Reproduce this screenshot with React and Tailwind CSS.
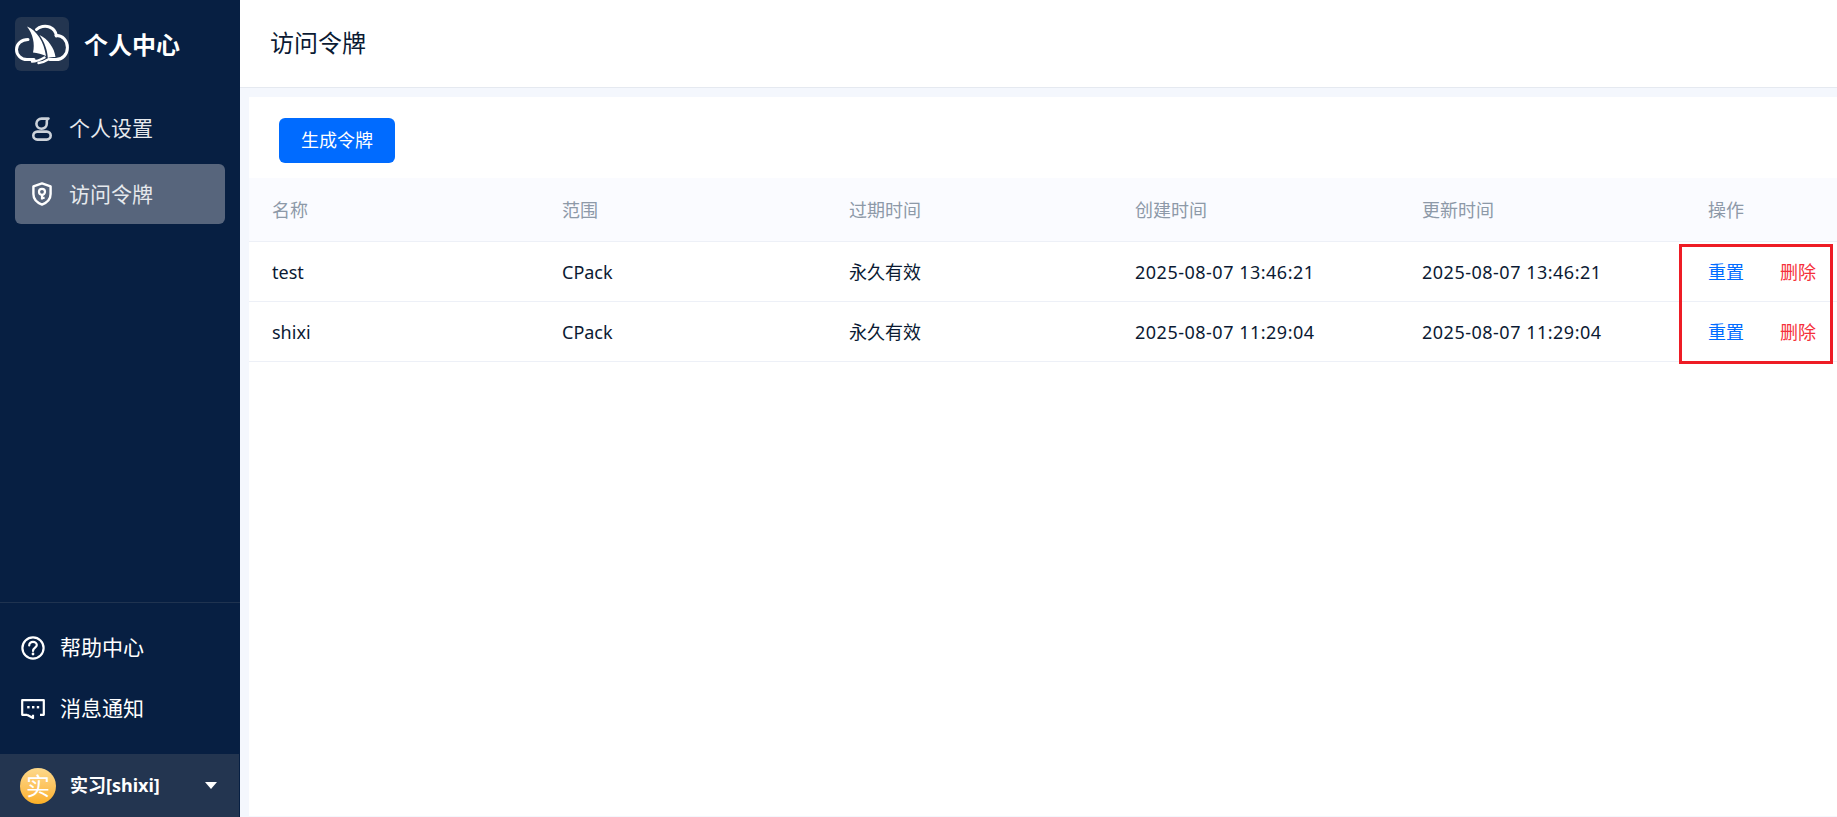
const font = { fontFamily: '"Noto Sans", "Noto Sans CJK SC", sans-serif' };

function Logo() {
  return (
    <svg width="54" height="54" viewBox="0 0 54 54" fill="none">
      <path d="M13 22.5 C6.5 22.5 1.5 27 1.5 32.6 C1.5 38 6 42.6 12 42.6 L19 42.6" stroke="#fff" strokeWidth="3" strokeLinecap="round" />
      <path d="M21.5 12.5 C24.5 9.5 30 8.4 34.5 10 C38.5 11.6 41 15 41.4 19" stroke="#fff" strokeWidth="3" strokeLinecap="round" />
      <path d="M41 18.5 C47.5 18 52.4 23.6 52.4 30.4 C52.4 37.4 47.5 42.6 41 42.6 L35 42.6" stroke="#fff" strokeWidth="3" strokeLinecap="round" />
      <path d="M12 9.5 C22 13.5 29 25 31 39 C27 37 22.5 36 18 35.5 C20 27 18 17 12 9.5 Z" fill="#fff" />
      <path d="M24.5 18 C33 22 39.5 31 40.5 40 C37.5 40 35 40.4 32.8 41 C32.4 33 29.5 25 24.5 18 Z" fill="#fff" />
      <path d="M17 44.5 C22 44.5 26 42.5 29.5 40.5 M23.5 46 C27.5 45.5 31 44 34 42" stroke="#fff" strokeWidth="2.4" strokeLinecap="round" />
    </svg>
  );
}

function UserIcon() {
  return (
    <svg width="20" height="24" viewBox="0 0 20 24" fill="none" stroke="#ccd2da" strokeWidth="2.6">
      <path d="M16.5 1.6 H9.6 C6.6 1.6 4.4 3.9 4.4 6.7 C4.4 9.5 6.7 11.7 9.6 11.7 C12.5 11.7 14.8 9.5 14.8 6.6 V4 C14.8 2.8 15.5 1.9 16.5 1.6 Z" strokeLinejoin="round" />
      <rect x="1.3" y="14.6" width="17.4" height="8" rx="4" />
    </svg>
  );
}

function ShieldIcon() {
  return (
    <svg width="20" height="24" viewBox="0 0 20 24" fill="none">
      <path d="M10 1.4 L18.6 4.4 V12 C18.6 17 15 20.6 10 22.6 C5 20.6 1.4 17 1.4 12 V4.4 Z" stroke="#fff" strokeWidth="2.4" strokeLinejoin="round" />
      <circle cx="10" cy="9.8" r="3" stroke="#fff" strokeWidth="2.2" />
      <path d="M10 12.5 V17.6 M10 15.8 H12.6" stroke="#fff" strokeWidth="2.2" />
    </svg>
  );
}

function HelpIcon() {
  return (
    <svg width="24" height="24" viewBox="0 0 24 24" fill="none" stroke="#fff" strokeWidth="2.2">
      <circle cx="12" cy="12" r="10.6" />
      <path d="M8.2 9.4 C8.2 7.2 9.9 5.8 12 5.8 C14.1 5.8 15.8 7.2 15.8 9.1 C15.8 11.6 12 11.9 12 15" strokeLinecap="round" />
      <circle cx="12" cy="18" r="1.4" fill="#fff" stroke="none" />
    </svg>
  );
}

function MessageIcon() {
  return (
    <svg width="24" height="20" viewBox="0 0 24 20" fill="none">
      <path d="M6 15.8 H1.2 V1.2 H22.8 V15.8 H19 M6 15.8 L12 19 V15.8" stroke="#fff" strokeWidth="2.2" strokeLinejoin="round" />
      <rect x="6.2" y="7" width="2.4" height="2.4" fill="#fff" />
      <rect x="11" y="7" width="2.4" height="2.4" fill="#fff" />
      <rect x="15.8" y="7" width="2.4" height="2.4" fill="#fff" />
    </svg>
  );
}

const columns = ['名称', '范围', '过期时间', '创建时间', '更新时间', '操作'];
const rows = [
  ['test', 'CPack', '永久有效', '2025-08-07 13:46:21', '2025-08-07 13:46:21'],
  ['shixi', 'CPack', '永久有效', '2025-08-07 11:29:04', '2025-08-07 11:29:04'],
];
const grid = 'grid grid-cols-[290px_287px_286px_287px_286px_1fr] items-center pl-[23px] pt-[1px]';

export default function App() {
  return (
    <div style={font} className="flex h-screen w-full overflow-hidden bg-white text-[18px] text-[#0b1a33]">
      <aside className="flex w-[240px] shrink-0 flex-col bg-[#071f42] text-white">
        <div className="flex h-[88px] items-center gap-[15px] pl-[15px]">
          <div className="flex h-[54px] w-[54px] items-center justify-center rounded-[6px] bg-[#233550]">
            <Logo />
          </div>
          <span className="pt-[2px] text-[24px] font-bold">个人中心</span>
        </div>
        <nav className="flex flex-col gap-[6px] px-[15px] pt-[11px]">
          <div className="flex h-[59px] items-center gap-[17px] rounded-[6px] pl-[17px] text-[21px] text-[#e6e9ed]">
            <UserIcon />
            <span>个人设置</span>
          </div>
          <div className="flex h-[60px] items-center gap-[17px] rounded-[6px] bg-[#57657c] pl-[17px] text-[21px] text-[#e6e9ed]">
            <ShieldIcon />
            <span className="pt-[1px]">访问令牌</span>
          </div>
        </nav>
        <div className="mt-auto flex flex-col border-t border-[#1f3350] pb-[15px] pt-[14px]">
          <div className="flex h-[61px] items-center gap-[15px] pl-[21px] text-[21px]">
            <HelpIcon />
            <span>帮助中心</span>
          </div>
          <div className="flex h-[61px] items-center gap-[15px] pl-[21px] text-[21px]">
            <MessageIcon />
            <span>消息通知</span>
          </div>
        </div>
        <div className="flex h-[63px] w-[239px] items-center bg-[#233550] pl-[20px] pr-[22px]">
          <div className="flex h-[36px] w-[36px] items-center justify-center rounded-full bg-gradient-to-b from-[#fdd98a] to-[#fbb023] text-[24px] text-white">实</div>
          <span className="ml-[14px] text-[18px] font-bold">实习[shixi]</span>
          <div className="ml-auto h-0 w-0 border-x-[6px] border-t-[7px] border-x-transparent border-t-white" />
        </div>
      </aside>

      <main className="flex min-w-0 flex-1 flex-col bg-[#f4f7fd]">
        <header className="flex h-[88px] shrink-0 items-center border-b border-[#e5e9f0] bg-white pb-[1px] pl-[30px] text-[24px]">
          访问令牌
        </header>
        <section className="relative mb-[1px] ml-[9px] mt-[9px] flex flex-1 flex-col bg-white">
          <div className="flex h-[81px] items-start pl-[30px] pt-[21px]">
            <button className="h-[45px] w-[116px] rounded-[6px] bg-[#006bff] text-[18px] text-white">生成令牌</button>
          </div>
          <div className={`${grid} h-[64px] border-b border-[#edf0f7] bg-[#fafbff] text-[#8d99a8]`}>
            {columns.map((c) => <div key={c}>{c}</div>)}
          </div>
          {rows.map((r) => (
            <div key={r[0]} className={`${grid} h-[60px] border-b border-[#edf0f7]`}>
              {r.map((v, i) => <div key={i} className={i > 2 ? 'tracking-[0.5px]' : ''}>{v}</div>)}
              <div className="flex gap-[36px]">
                <span className="text-[#006bff]">重置</span>
                <span className="text-[#f5303a]">删除</span>
              </div>
            </div>
          ))}
          <div className="absolute left-[1430px] top-[147px] h-[120px] w-[154px] border-[3px] border-[#ee1c25]" />
        </section>
      </main>
    </div>
  );
}
